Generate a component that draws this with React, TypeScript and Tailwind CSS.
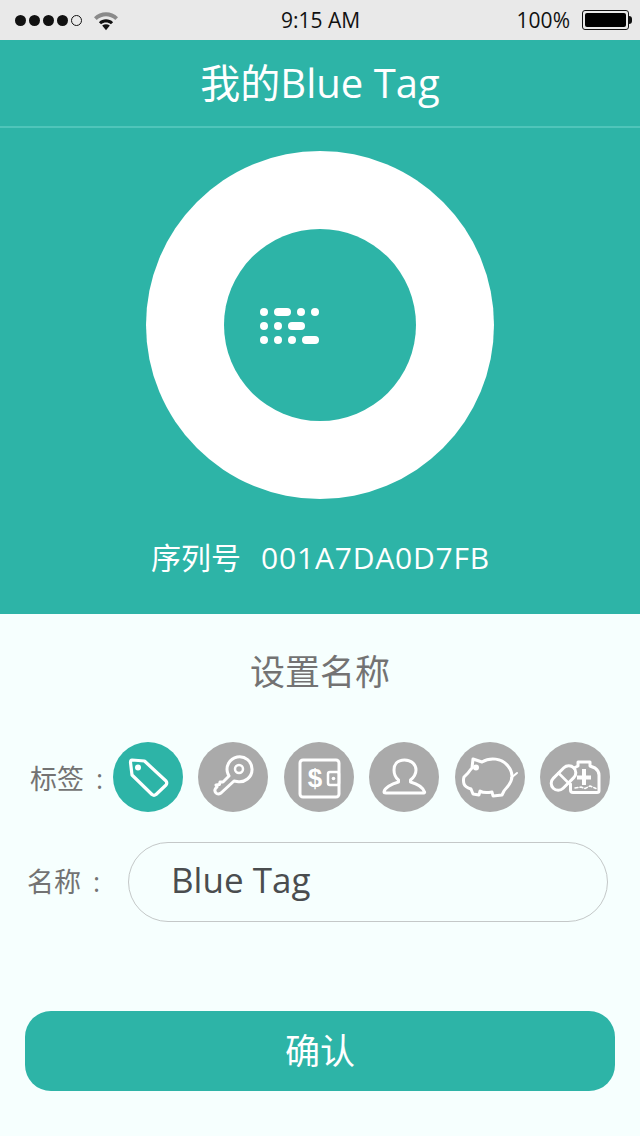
import React from 'react';

const FONT = "font-['Open_Sans','Noto_Sans_CJK_SC',sans-serif]";

const TagIcon = () => (
  <svg viewBox="0 0 70 70" className="w-[70px] h-[70px]" fill="none" stroke="#fff" strokeWidth="3.2" strokeLinejoin="round" strokeLinecap="round">
    <path d="M19 18 L31.500 19 L53 39 Q54.500 41 53 43 L43 52.500 Q41 54 39 52.500 L19 33 L17.500 20.500 Q17.500 18 19 18 Z" />
    <circle cx="25" cy="25.500" r="3" fill="#fff" stroke="none" />
  </svg>
);

const KeyIcon = () => (
  <svg viewBox="0 0 70 70" className="w-[70px] h-[70px]" fill="none" stroke="#fff" strokeWidth="3" strokeLinejoin="round" strokeLinecap="round">
    <path d="M30 32 A12.500 12.500 0 1 1 39 39.500 L36 39 L23 51 Q20 53 18 51 Q16 49 17.500 46.500 L19 45 L18 43 L21.500 42.500 L22 40 L25 40 L31 34 Z" />
    <circle cx="41" cy="27" r="4" strokeWidth="2.500" />
  </svg>
);

const WalletIcon = () => (
  <svg viewBox="0 0 70 70" className="w-[70px] h-[70px]" fill="none" stroke="#fff" strokeWidth="3" strokeLinejoin="round" strokeLinecap="round">
    <rect x="16" y="18" width="39" height="37" rx="3" />
    <rect x="44" y="30" width="11" height="13" rx="2" strokeWidth="2.500" />
    <circle cx="49.500" cy="36.500" r="1.800" fill="#fff" stroke="none" />
    <text x="31" y="45" textAnchor="middle" fill="#fff" stroke="none" fontSize="26" fontWeight="700" fontFamily="'Liberation Sans', sans-serif">$</text>
  </svg>
);

const UserIcon = () => (
  <svg viewBox="0 0 70 70" className="w-[70px] h-[70px]" fill="none" stroke="#fff" strokeWidth="3" strokeLinejoin="round" strokeLinecap="round">
    <path d="M35.500 18 C28 18 25 23 25 28 C25 33 27 36 29.500 38 L29.500 40 C22 42 15.500 46 15 50 Q15 51 17 51 L54 51 Q56 51 55.500 50 C54 46 49 42 41.500 40 L41.500 38 C44 36 47 33 47 28 C47 23 43 18 35.500 18 Z" />
  </svg>
);

const PigIcon = () => (
  <svg viewBox="0 0 70 70" className="w-[70px] h-[70px]" fill="none" stroke="#fff" strokeWidth="3" strokeLinejoin="round" strokeLinecap="round">
    <path d="M18 17 L27 20 C35 15 47 16 53 24 C57 29 58 34 56 39 C54 44 51 46 49 49 L47 53 L38 54 L37 50 C32 51 28 51 25 49 L24 53 L18 52 L16 47 C13 46 10 45 9 42 Q8 38 9 35 L13 31 Q15 28 17 26 Z" />
    <path d="M56 36 L62 31" strokeWidth="2" />
    <circle cx="21" cy="25.500" r="3" fill="#fff" stroke="none" />
  </svg>
);

const MedicineIcon = () => (
  <svg viewBox="0 0 70 70" className="w-[70px] h-[70px]" fill="none" stroke="#fff" strokeWidth="3" strokeLinejoin="round" strokeLinecap="round">
    <path d="M34 26 L38 24 L38 20 L50 20 L50 24 L55 26 Q59 29 59 33 L59 49 Q59 50.500 57 50.500 L33 50.500 Q30.500 50.500 30.500 48 L30.500 42" />
    <path d="M44 27 L44 43 M37 35.500 L51 35.500" strokeWidth="4" strokeLinecap="butt" />
    <rect x="9" y="29" width="29" height="14" rx="7" transform="rotate(-45 23.500 36)" />
    <path d="M18.500 31 L28.500 41" strokeWidth="2.500" />
    <path d="M35 46 L41 45 L45 46.500 L50 44 L56 46.500" strokeWidth="1.500" strokeDasharray="3 2" />
  </svg>
);

const tags = [
  { icon: <TagIcon />, active: true },
  { icon: <KeyIcon />, active: false },
  { icon: <WalletIcon />, active: false },
  { icon: <UserIcon />, active: false },
  { icon: <PigIcon />, active: false },
  { icon: <MedicineIcon />, active: false },
];

const StatusBar = () => (
  <div className="h-10 bg-[#e9e9e9] flex items-center justify-between pl-[15px] pr-2 relative text-[#111]">
    <div className="flex items-center">
      <div className="flex items-center gap-[3px]">
        <span className="w-[11px] h-[11px] rounded-full bg-[#111]" />
        <span className="w-[11px] h-[11px] rounded-full bg-[#111]" />
        <span className="w-[11px] h-[11px] rounded-full bg-[#111]" />
        <span className="w-[11px] h-[11px] rounded-full bg-[#111]" />
        <span className="w-[11px] h-[11px] rounded-full border border-[#111]" />
      </div>
      <svg viewBox="1 0 22 19" className="w-6 h-[21px] ml-3">
        <path d="M1 6.500 C7 0.500 17 0.500 23 6.500 L20.500 9 C15.500 4.500 8.500 4.500 3.500 9 Z" fill="#8a8a8a" />
        <path d="M5.500 11 C9 7.500 15 7.500 18.500 11 L16.500 13 C14 10.800 10 10.800 7.500 13 Z" fill="#111" />
        <path d="M8.500 14 C10.500 12.500 13.500 12.500 15.500 14 L12 18.500 Z" fill="#111" />
      </svg>
    </div>
    <span className="text-[21px] leading-none absolute left-[281px]">9:15 AM</span>
    <div className="flex items-center gap-3">
      <span className="text-[21px] leading-none">100%</span>
      <div className="flex items-center">
        <div className="w-[47px] h-[20px] rounded-[3px] border border-[#111] p-[2px]">
          <div className="w-full h-full rounded-[2px] bg-black" />
        </div>
        <div className="w-[3px] h-[8px] rounded-r-sm bg-[#111]" />
      </div>
    </div>
  </div>
);

const Dot = () => <span className="w-2 h-2 rounded-full bg-white" />;
const Dash = () => <span className="w-[17px] h-2 rounded-full bg-white" />;

const App: React.FC = () => {
  return (
    <div className={`w-[640px] h-[1136px] bg-[#f6fffe] flex flex-col overflow-hidden ${FONT}`}>
      <StatusBar />

      <div className="bg-[#2db4a7] h-[574px] flex flex-col items-center text-white">
        <h1 className="w-full h-[88px] border-b-2 border-[#4fc5ba] flex items-center justify-center text-[40px] leading-none font-normal">
          我的Blue Tag
        </h1>
        <div className="mt-[23px] w-[348px] h-[348px] rounded-full bg-white flex items-center justify-center">
          <div className="w-[192px] h-[192px] rounded-full bg-[#2db4a7] flex items-center pl-[36px] pt-[2px]">
            <div className="flex flex-col gap-[6px]">
              <div className="flex items-center gap-[6px]">
                <Dot /><Dash /><Dot /><Dot />
              </div>
              <div className="flex items-center gap-[6px]">
                <Dot /><Dot /><Dash />
              </div>
              <div className="flex items-center gap-[6px]">
                <Dot /><Dot /><Dot /><Dash />
              </div>
            </div>
          </div>
        </div>
        <p className="mt-[39px] text-[30px] leading-10 flex gap-5 pl-[1px]">
          <span>序列号</span>
          <span className="tracking-[0.8px]">001A7DA0D7FB</span>
        </p>
      </div>

      <div className="flex-1 flex flex-col">
        <h2 className="mt-[36px] text-center text-[35px] leading-[44px] text-[#737373] font-normal">设置名称</h2>

        <div className="mt-[48px] flex items-center pl-[30px] pr-[30px]">
          <span className="text-[27px] text-[#737373] w-[83px] shrink-0 whitespace-nowrap pt-1">
            标签<span className="ml-3">:</span>
          </span>
          <div className="flex flex-1 justify-between">
            {tags.map((tag, i) => (
              <div
                key={i}
                className={tag.active ? 'w-[70px] h-[70px] rounded-full bg-[#2db4a7]' : 'w-[70px] h-[70px] rounded-full bg-[#aaaaaa]'}
              >
                {tag.icon}
              </div>
            ))}
          </div>
        </div>

        <div className="mt-[30px] flex items-center pl-[27px] pr-8">
          <span className="text-[27px] text-[#737373] w-[101px] shrink-0 whitespace-nowrap">
            名称<span className="ml-3">:</span>
          </span>
          <div className="flex-1 h-20 rounded-[40px] border border-[#c4c8c8] flex items-center pl-[42px] pb-1 text-[35px] text-[#4a4d4f]">
            Blue Tag
          </div>
        </div>

        <button className="mt-[89px] mx-[25px] h-20 rounded-[26px] bg-[#2db4a7] text-white text-[35px] flex items-center justify-center">
          确认
        </button>
      </div>
    </div>
  );
};

export default App;
